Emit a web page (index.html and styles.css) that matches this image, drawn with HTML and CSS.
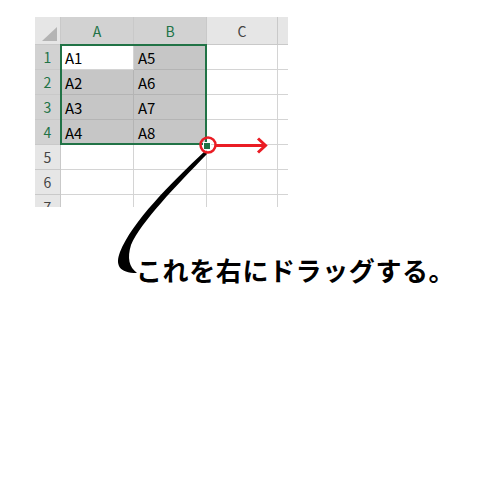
FILE: index.html
```html
<!DOCTYPE html>
<html lang="ja">
<head>
<meta charset="utf-8">
<link rel="stylesheet" href="styles.css">
</head>
<body>
<div class="page">
  <div class="sheet">
    <div class="grid">
      <div class="hd corner"><span class="tri"></span></div>
      <div class="hd col sel">A</div>
      <div class="hd col sel">B</div>
      <div class="hd col">C</div>
      <div class="hd col"></div>

      <div class="hd row sel">1</div>
      <div class="cell active">A1</div>
      <div class="cell in">A5</div>
      <div class="cell"></div>
      <div class="cell"></div>

      <div class="hd row sel">2</div>
      <div class="cell in">A2</div>
      <div class="cell in">A6</div>
      <div class="cell"></div>
      <div class="cell"></div>

      <div class="hd row sel">3</div>
      <div class="cell in">A3</div>
      <div class="cell in">A7</div>
      <div class="cell"></div>
      <div class="cell"></div>

      <div class="hd row sel">4</div>
      <div class="cell in">A4</div>
      <div class="cell in">A8</div>
      <div class="cell"></div>
      <div class="cell"></div>

      <div class="hd row">5</div>
      <div class="cell"></div>
      <div class="cell"></div>
      <div class="cell"></div>
      <div class="cell"></div>

      <div class="hd row">6</div>
      <div class="cell"></div>
      <div class="cell"></div>
      <div class="cell"></div>
      <div class="cell"></div>

      <div class="hd row">7</div>
      <div class="cell"></div>
      <div class="cell"></div>
      <div class="cell"></div>
      <div class="cell"></div>
    </div>
    <div class="selection"></div>
    <div class="handle"></div>
  </div>
  <p class="caption">これを右にドラッグする。</p>
  <svg class="overlay" width="500" height="498" viewBox="0 0 500 498" xmlns="http://www.w3.org/2000/svg">
    <path d="M205,151 C170,184 132,222 120,252 C115,265 119,273 137,273 C129,267 127,258 131,245 C141,222 176,186 207,154 Z" fill="#000"/>
    <circle cx="208" cy="145" r="7.5" fill="none" stroke="#ea1c24" stroke-width="2.5"/>
    <line x1="216" y1="145.5" x2="265" y2="145.5" stroke="#ea1c24" stroke-width="3"/>
    <polyline points="258,138.5 265.5,145.5 258,152.5" fill="none" stroke="#ea1c24" stroke-width="3"/>
  </svg>
</div>
</body>
</html>
```
FILE: styles.css
```css
html, body {
  margin: 0;
  padding: 0;
  background: #fff;
}
.page {
  position: relative;
  width: 500px;
  height: 498px;
  overflow: hidden;
}
.sheet {
  position: relative;
  margin: 17px 0 0 35px;
  width: 253px;
  height: 190px;
  overflow: hidden;
}
.grid {
  display: grid;
  grid-template-columns: 26px 73px 73px 71px 20px;
  grid-template-rows: 28px repeat(7, 25px);
  font-family: "Noto Sans CJK JP", "Noto Sans", sans-serif;
  font-size: 14px;
}
.grid > div {
  box-sizing: border-box;
  border-right: 1px solid #d4d4d4;
  border-bottom: 1px solid #d4d4d4;
}
.hd {
  background: #e6e6e6;
  color: #444;
  display: flex;
  align-items: center;
  justify-content: center;
}
.grid > .hd {
  border-color: #c9c9c9;
}
.hd.sel {
  background: #d2d2d2;
  color: #217346;
}
.grid > .hd.col.sel {
  border-bottom: 1px solid #217346;
}
.corner {
  position: relative;
}
.tri {
  position: absolute;
  right: 3px;
  bottom: 3px;
  width: 15px;
  height: 14px;
  background: #b4b4b4;
  clip-path: polygon(100% 0, 100% 100%, 0 100%);
}
.cell {
  display: flex;
  align-items: center;
  padding-left: 4px;
  color: #000;
  font-size: 15px;
}
.grid > .cell.in {
  background: #c6c6c6;
  border-color: #b4b4b4;
}
.cell.active {
  background: #fff;
}
.selection {
  position: absolute;
  left: 25px;
  top: 27px;
  width: 147px;
  height: 101px;
  box-sizing: border-box;
  border: 2px solid #217346;
}
.handle {
  position: absolute;
  left: 168px;
  top: 125px;
  width: 6px;
  height: 6px;
  background: #217346;
  border: 1px solid #fff;
}
.caption {
  margin: 48px 0 0 136px;
  font-family: "Noto Sans CJK JP", sans-serif;
  font-weight: bold;
  font-size: 26px;
  letter-spacing: 0.6px;
  line-height: 30px;
  color: #000;
  white-space: nowrap;
}
.overlay {
  position: absolute;
  left: 0;
  top: 0;
  pointer-events: none;
}
```
